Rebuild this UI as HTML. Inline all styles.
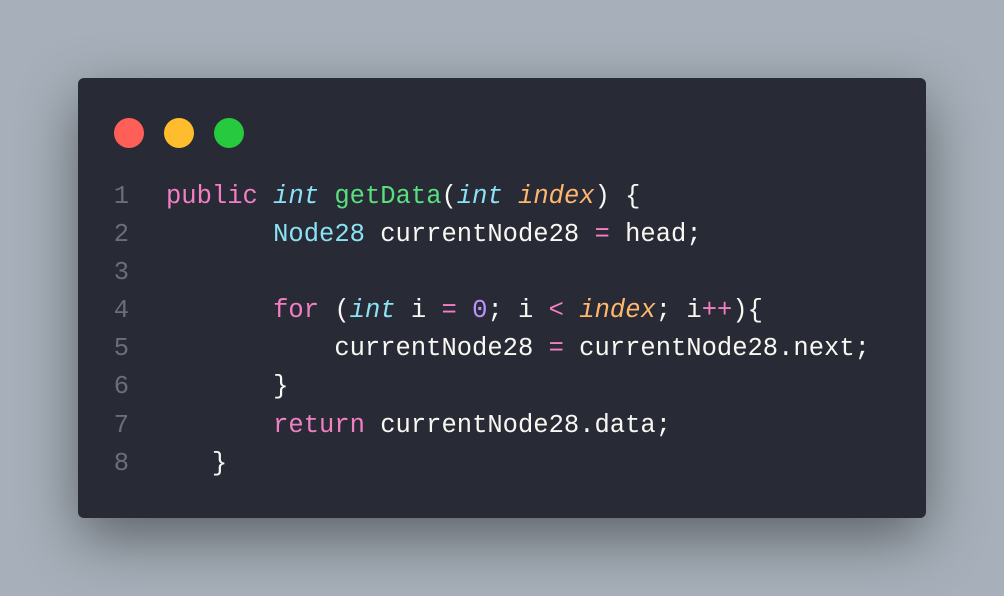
<!DOCTYPE html>
<html><head><style>
html,body{margin:0;padding:0;}
body{width:1004px;height:596px;background:#a7b0ba;position:relative;overflow:hidden;font-family:"Liberation Mono",monospace;}
.win{position:absolute;left:78px;top:78px;width:848px;height:440px;background:#282a36;border-radius:6px;box-shadow:0 20px 60px rgba(0,0,0,0.45);}
.dot{position:absolute;top:40px;width:30px;height:30px;border-radius:50%;}
pre{position:absolute;left:0;top:100px;margin:0;font-family:"Liberation Mono",monospace;font-size:25.5px;line-height:38.1px;color:#f8f8f2;}
.ln{display:inline-block;width:51px;text-align:right;color:#6b6e7a;margin-right:37px;}
.k{color:#f27fc4}.t{color:#8be2f4;font-style:italic}.c{color:#8be2f4}.f{color:#57e07e}.p{color:#ffb86c;font-style:italic}.n{color:#bd93f9}
</style></head><body>
<div class="win">
<div class="dot" style="left:36px;background:#ff5f56"></div>
<div class="dot" style="left:86px;background:#ffbd2e"></div>
<div class="dot" style="left:136px;background:#27c93f"></div>
<pre><span class="ln">1</span><span class="k">public</span> <span class="t">int</span> <span class="f">getData</span>(<span class="t">int</span> <span class="p">index</span>) {
<span class="ln">2</span>       <span class="c">Node28</span> currentNode28 <span class="k">=</span> head;
<span class="ln">3</span>
<span class="ln">4</span>       <span class="k">for</span> (<span class="t">int</span> i <span class="k">=</span> <span class="n">0</span>; i <span class="k">&lt;</span> <span class="p">index</span>; i<span class="k">++</span>){
<span class="ln">5</span>           currentNode28 <span class="k">=</span> currentNode28.next;
<span class="ln">6</span>       }
<span class="ln">7</span>       <span class="k">return</span> currentNode28.data;
<span class="ln">8</span>   }</pre>
</div>
</body></html>
